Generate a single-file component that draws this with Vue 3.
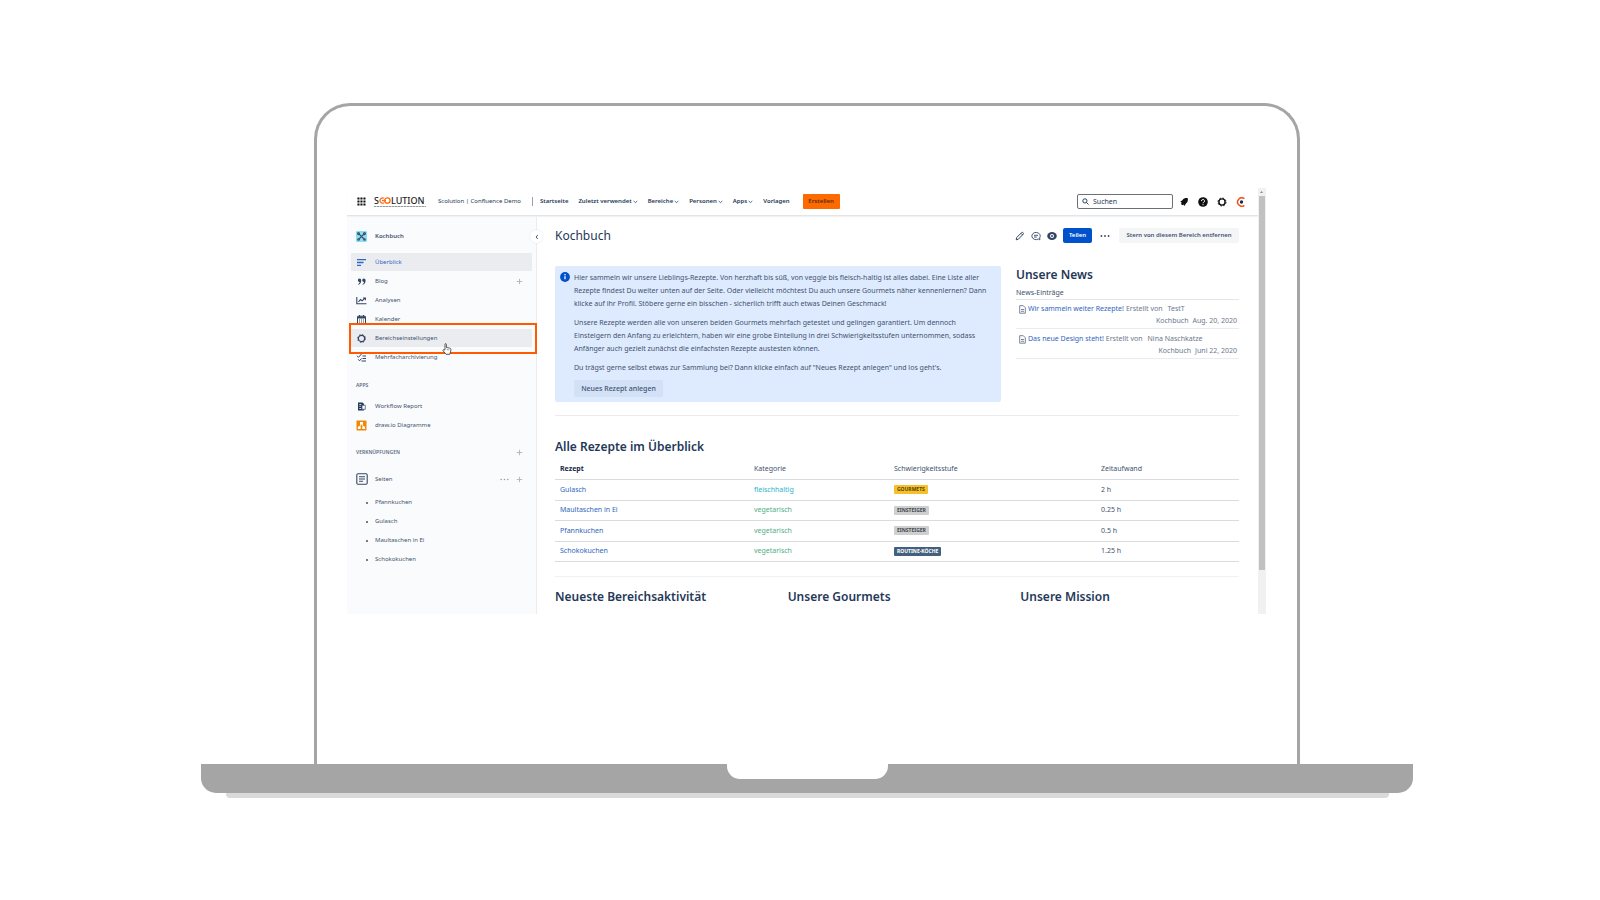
<script setup>
const navItems = [
  { label: 'Startseite', menu: false },
  { label: 'Zuletzt verwendet', menu: true },
  { label: 'Bereiche', menu: true },
  { label: 'Personen', menu: true },
  { label: 'Apps', menu: true },
  { label: 'Vorlagen', menu: false },
]
const spaceItems = [
  { label: 'Überblick', icon: 'overview', active: true },
  { label: 'Blog', icon: 'blog', add: true },
  { label: 'Analysen', icon: 'chart' },
  { label: 'Kalender', icon: 'calendar' },
  { label: 'Bereichseinstellungen', icon: 'gear', marked: true },
  { label: 'Mehrfacharchivierung', icon: 'archive' },
]
const pages = ['Pfannkuchen', 'Gulasch', 'Maultaschen in Ei', 'Schokokuchen']
const news = [
  { title: 'Wir sammeln weiter Rezepte!', author: 'TestT', date: 'Aug. 20, 2020' },
  { title: 'Das neue Design steht!', author: 'Nina Naschkatze', date: 'Juni 22, 2020' },
]
const recipes = [
  { name: 'Gulasch', kind: 'fleischhaltig', meat: true, level: 'GOURMETS', tone: 'yellow', time: '2 h' },
  { name: 'Maultaschen in Ei', kind: 'vegetarisch', level: 'EINSTEIGER', tone: 'grey', time: '0.25 h' },
  { name: 'Pfannkuchen', kind: 'vegetarisch', level: 'EINSTEIGER', tone: 'grey', time: '0.5 h' },
  { name: 'Schokokuchen', kind: 'vegetarisch', level: 'ROUTINE-KÖCHE', tone: 'blue', time: '1.25 h' },
]
</script>

<template>
  <div class="page">
    <div class="screen">
      <div class="app">
        <div class="window">
          <header class="topbar">
            <button class="icon-btn" aria-label="App-Umschalter">
              <svg width="9" height="9" viewBox="0 0 9 9" fill="#111">
                <template v-for="y in 3" :key="y">
                  <rect v-for="x in 3" :key="x" :x="(x - 1) * 3 + 0.4" :y="(y - 1) * 3 + 0.4" width="2.1" height="2.1" rx="0.3" />
                </template>
              </svg>
            </button>
            <a class="logo" href="#" aria-label="Scolution">
              <span class="logo-name">S<svg width="12" height="7" viewBox="0 0 12 7" fill="none" stroke="#ff6a13" stroke-width="1.3"><path d="M5 1.300A2.600 2.600 0 1 0 5 5.700" /><circle cx="8.400" cy="3.500" r="2.700" /><path d="M3 3.500h4" /></svg>LUTION</span>
              <span class="logo-line"></span>
            </a>
            <a class="site" href="#">Scolution | Confluence Demo</a>
            <nav class="nav">
              <a v-for="n in navItems" :key="n.label" href="#">{{ n.label }}<svg v-if="n.menu" width="5" height="4" viewBox="0 0 5 4" fill="none" stroke="#344563" stroke-width="0.8"><path d="M.7 1l1.8 1.6L4.3 1" /></svg></a>
            </nav>
            <button class="create">Erstellen</button>
            <label class="search">
              <svg width="7" height="7" viewBox="0 0 7 7" fill="none" stroke="#172b4d" stroke-width="0.9"><circle cx="2.9" cy="2.9" r="2.1" /><path d="M4.5 4.5l2 2" /></svg>
              <input type="text" placeholder="Suchen" aria-label="Suchen" />
            </label>
            <div class="tools">
              <button class="icon-btn" aria-label="Benachrichtigungen"><svg width="10" height="10" viewBox="0 0 10 10" fill="#111"><path d="M8.800 1.200C6.800.9 4.600 1.300 3.600 3L1.200 4.700l1.600 1-.9 1.200 1.400 1.400 1.100-.8 1 1.500L7 6.500C8.700 5.400 9.100 3.200 8.800 1.200z" /></svg></button>
              <button class="icon-btn" aria-label="Hilfe"><svg width="10" height="10" viewBox="0 0 10 10"><circle cx="5" cy="5" r="4.8" fill="#111" /><path d="M3.500 4a1.500 1.500 0 1 1 2.300 1.200c-.5.300-.8.500-.8 1" fill="none" stroke="#fff" stroke-width="1" /><circle cx="5" cy="7.600" r=".6" fill="#fff" /></svg></button>
              <button class="icon-btn" aria-label="Einstellungen"><svg width="10" height="10" viewBox="0 0 10 10" fill="none" stroke="#111"><circle cx="5" cy="5" r="3.100" stroke-width="1.400" /><circle cx="5" cy="5" r="4" stroke-width="1" stroke-dasharray="1.600 1.540" /></svg></button>
              <button class="icon-btn" aria-label="Profil"><svg width="10" height="10" viewBox="0 0 10 10" fill="none"><path d="M8.400 1.700A4.200 4.200 0 1 0 8.400 8.300" stroke="#f4511e" stroke-width="1.500" /><circle cx="5.500" cy="5" r="1.700" fill="#172b4d" /></svg></button>
            </div>
          </header>

          <div class="body">
            <aside class="sidebar">
              <a class="space" href="#">
                <svg width="11" height="11" viewBox="0 0 11 11"><rect width="11" height="11" rx="1" fill="#8fdcf5" /><g fill="none" stroke="#3b5568" stroke-width="1.100"><path d="M2.500 2.500l6 6M8.500 2.500l-6 6" /><circle cx="2.500" cy="2.600" r="1" /><circle cx="8.500" cy="2.600" r="1" /><circle cx="2.500" cy="8.500" r=".8" /><circle cx="8.500" cy="8.500" r=".8" /></g></svg>
                <span>Kochbuch</span>
              </a>
              <ul class="menu">
                <li v-for="s in spaceItems" :key="s.label" :class="{ active: s.active, marked: s.marked }">
                  <a href="#">
                    <svg v-if="s.icon === 'overview'" width="11" height="11" viewBox="0 0 11 11" stroke="#2f66c0" stroke-width="1.300"><path d="M1 2.700h9M1 5.500h6.500M1 8.300h4" /></svg>
                    <svg v-else-if="s.icon === 'blog'" width="11" height="11" viewBox="0 0 11 11" fill="#344563"><path d="M3.500 2.500a1.700 1.700 0 1 0 .1 3.400C3.500 7 3 7.600 2.200 8v.8C4.200 8.200 5.200 6.600 5.200 4.500c0-1.200-.7-2-1.700-2zM7.900 2.500A1.700 1.700 0 1 0 8 5.900C7.900 7 7.400 7.600 6.600 8v.8c2-.6 3-2.200 3-4.300 0-1.200-.7-2-1.700-2z" /></svg>
                    <svg v-else-if="s.icon === 'chart'" width="11" height="11" viewBox="0 0 11 11" fill="none" stroke="#344563" stroke-width="1.100"><path d="M.8 2v6.800h9.700M2.500 6.800l2-2.300 1.600 1.300 2.900-2.600M7 3h2.400v2.200" /></svg>
                    <svg v-else-if="s.icon === 'calendar'" width="11" height="11" viewBox="0 0 11 11" fill="none" stroke="#344563"><rect x="1.500" y="2.200" width="8" height="7.600" rx=".6" /><path d="M1.500 3.500h8" stroke-width="2" /><path d="M3.500 1v2M7.500 1v2" /><path d="M3 6h5M3 8h5" stroke-dasharray="1 1" /></svg>
                    <svg v-else-if="s.icon === 'gear'" width="11" height="11" viewBox="0 0 11 11" fill="none" stroke="#344563"><circle cx="5.500" cy="5.500" r="3.100" stroke-width="1.200" /><circle cx="5.500" cy="5.500" r="3.900" stroke-width="1" stroke-dasharray="1.530 1.533" /></svg>
                    <svg v-else width="11" height="11" viewBox="0 0 11 11" fill="none" stroke="#344563" stroke-width="1"><path d="M1 3.800l1.500 1.500L5.500 2M6.500 4H10M2.200 7.300l1.300 1.500L5.500 6.500M6.500 6.500H10M5.500 9H10" /></svg>
                    <span>{{ s.label }}</span>
                  </a>
                  <button v-if="s.add" class="plus" aria-label="Blogbeitrag hinzufügen"><svg width="7" height="7" viewBox="0 0 7 7" stroke="#b3bac5"><path d="M3.500 .8v5.400M.8 3.500h5.400" /></svg></button>
                  <div v-if="s.marked" class="marker"></div>
                  <svg v-if="s.marked" class="cursor" width="10" height="12" viewBox="0 0 10 12"><path d="M3 6.800V1.500c0-1.200 1.400-1.200 1.400 0v3l3.200.6c1 .2 1.400.7 1.300 1.700L8.500 9l-.8 2.300H4L1.100 7.700c-.5-.9.400-1.400 1-.8z" fill="#fff" stroke="#333" stroke-width=".8" /><path d="M5.300 6v1.200M6.800 6.200v1.200" stroke="#333" stroke-width=".5" /></svg>
                </li>
              </ul>
              <h2 class="group">APPS</h2>
              <ul class="menu">
                <li><a href="#">
                  <svg width="11" height="11" viewBox="0 0 11 11"><path d="M2 1.500h4.500l1.500 1.500v6.500H2z" fill="#253858" /><path d="M3.300 3.500h2M3.300 5.300h1.500M3.300 7.500h2" stroke="#fff" stroke-width=".8" /><path d="M6 4.300h3.300v4H6z" fill="#fff" stroke="#4a5f80" stroke-width=".8" /></svg>
                  <span>Workflow Report</span></a></li>
                <li><a href="#">
                  <svg width="11" height="11" viewBox="0 0 11 11"><rect x=".5" y=".5" width="10" height="10" rx=".8" fill="#f08705" /><path d="M5.500 3.500l-2.300 4M5.500 3.500l2.300 4" stroke="#fff" stroke-width=".9" /><path d="M4 2h3v2.400H4zM1.900 6.600h2.800V9H1.900zM6.300 6.600h2.800V9H6.300z" fill="#fff" /></svg>
                  <span>draw.io Diagramme</span></a></li>
              </ul>
              <div class="group-row">
                <h2 class="group">VERKNÜPFUNGEN</h2>
                <button class="plus" aria-label="Verknüpfung hinzufügen"><svg width="7" height="7" viewBox="0 0 7 7" stroke="#b3bac5"><path d="M3.500 .8v5.400M.8 3.500h5.400" /></svg></button>
              </div>
              <div class="pages-head">
                <svg width="12" height="12" viewBox="0 0 12 12" fill="none" stroke="#344563" stroke-width="1.100"><rect x=".8" y=".8" width="10.400" height="10.400" rx="1.200" /><path d="M3 3.800h6M3 6h6M3 8.200h4" /></svg>
                <span>Seiten</span>
                <button class="plus" aria-label="Weitere Aktionen"><svg width="9" height="7" viewBox="0 0 9 7" fill="#97a0af"><circle cx="1.200" cy="3.500" r=".8" /><circle cx="4.500" cy="3.500" r=".8" /><circle cx="7.800" cy="3.500" r=".8" /></svg></button>
                <button class="plus" aria-label="Seite hinzufügen"><svg width="7" height="7" viewBox="0 0 7 7" stroke="#b3bac5"><path d="M3.500 .8v5.400M.8 3.500h5.400" /></svg></button>
              </div>
              <ul class="pages">
                <li v-for="p in pages" :key="p"><a href="#">{{ p }}</a></li>
              </ul>
              <button class="collapse" aria-label="Seitenleiste einklappen"><svg width="4" height="6" viewBox="0 0 4 6" fill="none" stroke="#344563" stroke-width=".9"><path d="M2.800 1L1 3l1.800 2" /></svg></button>
            </aside>

            <main class="main">
              <div class="title-row">
                <h1>Kochbuch</h1>
                <div class="actions">
                  <button class="icon-btn" aria-label="Bearbeiten"><svg width="10" height="10" viewBox="0 0 10 10" fill="none" stroke="#344563"><path d="M1.200 8.800l.5-2.300L6.700 1.500c.8-.8 2.400.8 1.600 1.600L3.400 8.200zM6 2.300l1.700 1.700" /></svg></button>
                  <button class="icon-btn" aria-label="Kommentare"><svg width="10" height="10" viewBox="0 0 10 10" fill="none" stroke="#344563" stroke-width=".9"><path d="M8.800 8.900L7.400 8A4.200 3.600 0 1 1 8.700 6.800z" /><path d="M3 4.300h4M3 6h2.800" /></svg></button>
                  <button class="icon-btn" aria-label="Beobachten"><svg width="10" height="10" viewBox="0 0 10 10"><ellipse cx="5" cy="5" rx="4.800" ry="4" fill="#344563" /><circle cx="5" cy="5" r="2" fill="#fff" /><circle cx="5" cy="5" r="1" fill="#344563" /></svg></button>
                  <button class="share">Teilen</button>
                  <button class="icon-btn" aria-label="Mehr"><svg width="10" height="10" viewBox="0 0 10 10" fill="#344563"><circle cx="1.400" cy="5" r=".9" /><circle cx="5" cy="5" r=".9" /><circle cx="8.600" cy="5" r=".9" /></svg></button>
                  <button class="star">Stern von diesem Bereich entfernen</button>
                </div>
              </div>

              <div class="intro">
                <section class="info">
                  <svg width="10" height="10" viewBox="0 0 10 10"><circle cx="5" cy="5" r="4.900" fill="#0052cc" /><path d="M5 4.300v3" stroke="#fff" stroke-width="1.300" /><circle cx="5" cy="2.700" r=".8" fill="#fff" /></svg>
                  <div>
                    <p>Hier sammeln wir unsere Lieblings-Rezepte. Von herzhaft bis süß, von veggie bis fleisch-haltig ist alles dabei. Eine Liste aller<br />Rezepte findest Du weiter unten auf der Seite. Oder vielleicht möchtest Du auch unsere Gourmets näher kennenlernen? Dann<br />klicke auf ihr Profil. Stöbere gerne ein bisschen - sicherlich trifft auch etwas Deinen Geschmack!</p>
                    <p>Unsere Rezepte werden alle von unseren beiden Gourmets mehrfach getestet und gelingen garantiert. Um dennoch<br />Einsteigern den Anfang zu erleichtern, haben wir eine grobe Einteilung in drei Schwierigkeitsstufen unternommen, sodass<br />Anfänger auch gezielt zunächst die einfachsten Rezepte austesten können.</p>
                    <p>Du trägst gerne selbst etwas zur Sammlung bei? Dann klicke einfach auf "Neues Rezept anlegen" und los geht's.</p>
                    <button class="new">Neues Rezept anlegen</button>
                  </div>
                </section>
                <section class="news">
                  <h2>Unsere News</h2>
                  <h3>News-Einträge</h3>
                  <article v-for="n in news" :key="n.title">
                    <div class="entry">
                      <svg width="7" height="9" viewBox="0 0 7 9" fill="none" stroke="#6b778c" stroke-width=".9"><path d="M.7.700h3.600l2 2v5.500H.700zM2 4.500h3M2 6.300h3" /></svg>
                      <a href="#">{{ n.title }}</a><span>Erstellt von</span><span class="author">{{ n.author }}</span>
                    </div>
                    <div class="meta"><span>Kochbuch</span><span>{{ n.date }}</span></div>
                  </article>
                </section>
              </div>

              <section class="recipes">
                <h2>Alle Rezepte im Überblick</h2>
                <table>
                  <thead>
                    <tr><th class="first">Rezept</th><th class="kind">Kategorie</th><th class="level">Schwierigkeitsstufe</th><th>Zeitaufwand</th></tr>
                  </thead>
                  <tbody>
                    <tr v-for="r in recipes" :key="r.name">
                      <td><a href="#">{{ r.name }}</a></td>
                      <td :class="r.meat ? 'meat' : 'veg'">{{ r.kind }}</td>
                      <td><span class="tag" :class="r.tone">{{ r.level }}</span></td>
                      <td>{{ r.time }}</td>
                    </tr>
                  </tbody>
                </table>
              </section>

              <div class="bottom">
                <h2>Neueste Bereichsaktivität</h2>
                <h2>Unsere Gourmets</h2>
                <h2>Unsere Mission</h2>
              </div>
            </main>
          </div>
        </div>
        <div class="scrollbar">
          <svg width="7" height="8" viewBox="0 0 7 8" fill="#8a8a8a"><path d="M3.500 3L5 5H2z" /></svg>
          <div class="thumb"></div>
        </div>
      </div>
    </div>
    <div class="base"><div class="notch"></div></div>
    <div class="foot"></div>
  </div>
</template>

<style>
body { background: #fff; }
</style>

<style scoped>
.page {
  padding: 103px 187px 100px 201px;
  font-family: "Noto Sans", "Open Sans", sans-serif;
  font-size: 7px;
  line-height: 13px;
  color: #42526e;
}
.page * { box-sizing: border-box; }
h1, h2, h3, p, ul { margin: 0; padding: 0; font-weight: 400; }
ul { list-style: none; }
a { color: inherit; text-decoration: none; }
button { border: 0; background: none; padding: 0; font: inherit; color: inherit; white-space: nowrap; cursor: pointer; }
svg { display: block; flex: none; }

.screen {
  margin: 0 113px;
  padding: 82px 31px 150px 30px;
  border: 3px solid #a5a5a5;
  border-bottom: 0;
  border-radius: 36px 36px 0 0;
}
.base {
  height: 29px;
  background: #a5a5a5;
  border-radius: 0 0 15px 15px;
}
.notch {
  width: 161px;
  height: 15px;
  margin: 0 auto;
  background: #fff;
  border-radius: 0 0 13px 13px;
}
.foot {
  height: 5px;
  margin: 0 24px 0 25px;
  background: #dadada;
  border-radius: 0 0 4px 4px;
}

.app { display: flex; }
.window { flex: 1; min-width: 0; }
.scrollbar { width: 8px; background: #f1f1f1; }
.thumb { width: 6px; height: 374px; margin: 0 auto; background: #c1c1c1; }

.topbar {
  position: relative;
  z-index: 1;
  display: flex;
  align-items: center;
  height: 28px;
  padding: 0 12px 0 10px;
  font-size: 6px;
  color: #253858;
  border-bottom: 1px solid #e4e5e8;
  box-shadow: 0 1px 1px #f1f2f4;
}
.icon-btn { display: flex; }
.logo { display: block; margin-left: 8px; width: 52px; color: #222; }
.logo-name { display: flex; align-items: center; font-size: 9px; line-height: 8px; font-weight: 500; }
.logo-line { display: block; height: 1px; margin-top: 1px; background: repeating-linear-gradient(90deg, #999 0 2px, #ccc 2px 3px); }
.site { margin-left: 12px; padding-right: 9px; border-right: 1px solid #97a0af; line-height: 9px; width: 95px; white-space: nowrap; }
.nav { display: flex; gap: 10px; margin-left: 7px; font-weight: 600; white-space: nowrap; }
.nav a { display: flex; align-items: center; gap: 1px; }
.create { width: 37px; height: 15px; margin-left: 13px; background: #ff6a00; color: #5a2a10; border-radius: 1px; font-weight: 600; }
.search {
  display: flex;
  align-items: center;
  gap: 4px;
  width: 96px;
  height: 15px;
  margin-left: auto;
  padding: 0 4px;
  border: 1px solid #6b6f76;
  border-radius: 2px;
}
.search input { flex: 1; min-width: 0; height: 11px; padding: 0; border: 0; outline: 0; background: none; font: inherit; font-size: 7px; color: #253858; }
.search input::placeholder { color: #253858; opacity: 1; }
.tools { display: flex; gap: 9px; margin-left: 6px; }

.body { display: flex; height: 398px; overflow: hidden; }
.sidebar {
  position: relative;
  width: 190px;
  padding: 13px 4px 0;
  background: #fafbfc;
  border-right: 1px solid #ebecf0;
  font-size: 6px;
}
.space { display: flex; align-items: center; gap: 8px; height: 14px; padding-left: 5px; font-weight: 600; }
.space + .menu { margin-top: 10px; }
.menu { display: flex; flex-direction: column; gap: 1px; }
.menu li { position: relative; display: flex; align-items: center; justify-content: space-between; height: 18px; padding: 0 9px 0 5px; }
.menu a { display: flex; align-items: center; gap: 8px; }
.active { background: #ebecf0; color: #2f66c0; }
.marked { background: #ebecf0; }
.marker { position: absolute; inset: -6px -5px -7px -2px; border: 2px solid #ff5a00; z-index: 1; }
.cursor { position: absolute; left: 91px; top: 14px; z-index: 2; }
.plus { display: flex; }
.group { margin: 14px 0 7px 5px; font-size: 5px; line-height: 10px; font-weight: 600; color: #5e6c84; }
.group-row { display: flex; align-items: center; justify-content: space-between; margin-top: 13px; padding-right: 9px; }
.group-row .group { margin: 0 0 0 5px; }
.pages-head { display: flex; align-items: center; gap: 7px; height: 18px; margin-top: 13px; padding: 0 9px 0 5px; }
.pages-head span { margin-right: auto; }
.pages { margin-top: 5px; }
.pages li { display: flex; align-items: center; height: 19px; padding-left: 15px; gap: 7px; }
.pages li::before { content: ""; width: 2px; height: 2px; border-radius: 1px; background: #42526e; }
.collapse {
  position: absolute;
  right: -7px;
  top: 14px;
  display: flex;
  align-items: center;
  justify-content: center;
  width: 13px;
  height: 13px;
  border-radius: 50%;
  background: #fff;
  box-shadow: 0 0 2px #dfe1e6;
}

.main { flex: 1; min-width: 0; padding: 11px 19px 0 18px; }
.title-row { display: flex; align-items: center; justify-content: space-between; height: 17px; }
h1 { font-size: 12px; line-height: 17px; color: #253858; }
h2 { font-size: 12px; line-height: 16px; font-weight: 600; color: #253858; }
.actions { display: flex; align-items: center; gap: 6px; font-size: 6px; font-weight: 600; }
.share { width: 29px; height: 15px; background: #0052cc; color: #fff; border-radius: 2px; }
.actions .share { margin-right: 2px; }
.star { width: 120px; height: 15px; margin-left: 3px; background: #f4f5f7; border-radius: 2px; }

.intro {
  display: grid;
  grid-template-columns: 446px 1fr;
  gap: 15px;
  margin-top: 22px;
  padding-bottom: 13px;
  border-bottom: 1px solid #ebecf0;
}
.info { display: flex; gap: 4px; padding: 5px; background: #deebff; border-radius: 2px; white-space: nowrap; }
.info > svg { margin-top: 1px; }
.info p { margin-bottom: 6px; }
.new { display: block; width: 89px; height: 17px; background: #d3e1f7; border-radius: 2px; font-weight: 500; }
.news { padding-top: 1px; }
.news h3 { margin-top: 4px; font-size: 7px; line-height: 12px; border-bottom: 1px solid #e4e5e8; }
.news article { padding: 3px 2px 1px 3px; border-bottom: 1px solid #ebecf0; line-height: 12px; color: #6b778c; white-space: nowrap; }
.news article + article { padding-top: 4px; }
.entry { display: flex; align-items: center; gap: 2px; }
.entry a { color: #2f66c0; }
.author { margin-left: 3px; }
.meta { display: flex; justify-content: flex-end; gap: 4px; }

.recipes { padding: 23px 0 14px; border-bottom: 1px solid #f0f1f3; }
table { width: 100%; margin-top: 4px; border-collapse: collapse; table-layout: fixed; }
th, td { height: 20px; padding: 0 5px; text-align: left; font-weight: 400; border-bottom: 1px solid #d9dbdf; line-height: 12px; }
tr:nth-child(odd) td { height: 21px; }
.first { width: 194px; font-weight: 700; color: #172b4d; }
.kind { width: 140px; }
.level { width: 207px; }
td a { color: #2f66c0; }
.meat { color: #1fb5cf; }
.veg { color: #4fae87; }
.tag { display: inline-block; padding: 0 3px; border-radius: 1px; font-size: 5px; line-height: 9px; font-weight: 700; vertical-align: middle; }
.yellow { background: #f6c02d; color: #594300; }
.grey { background: #cfcfcf; color: #42484f; }
.blue { background: #44607f; color: #fff; }
.bottom { display: grid; grid-template-columns: 1fr 1fr 1fr; gap: 14px; padding-top: 12px; }
</style>
